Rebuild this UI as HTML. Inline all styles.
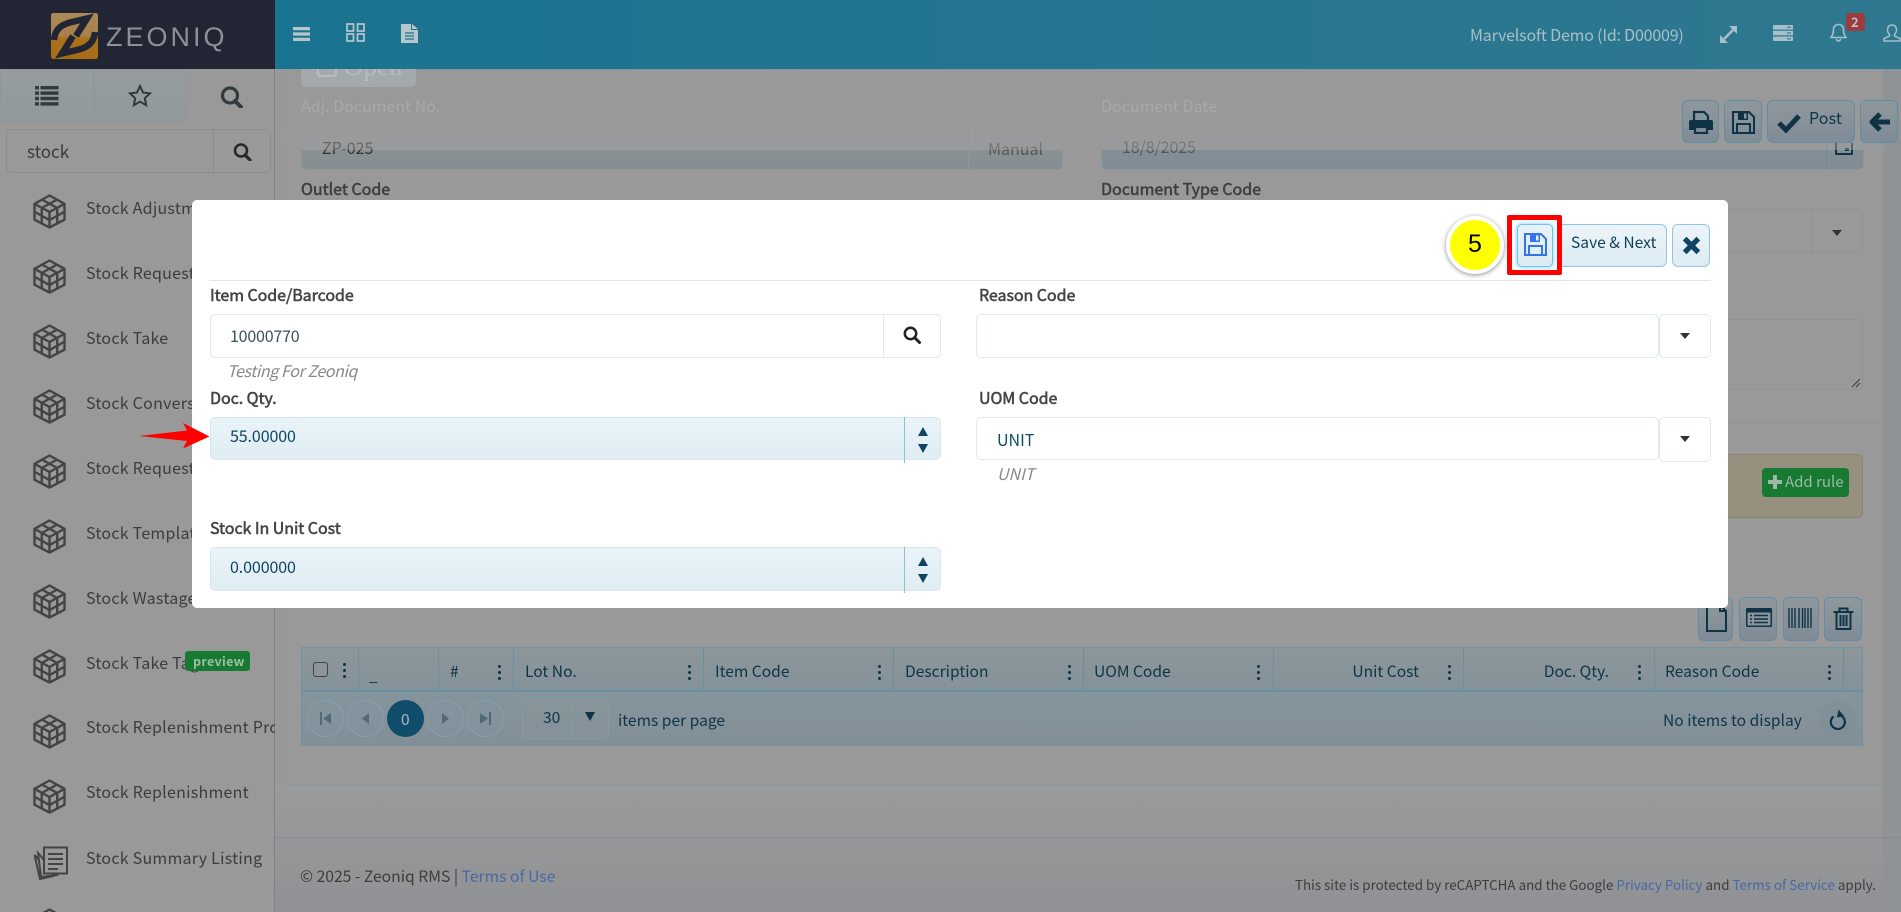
<!DOCTYPE html>
<html lang="en"><head><meta charset="utf-8"><title>Zeoniq</title>
<style>
html,body{margin:0;padding:0;width:1901px;height:912px;overflow:hidden;background:#999}
body{position:relative;font-family:"Noto Sans CJK SC","Liberation Sans",sans-serif;font-size:16px;color:#3a3a3a}
div,span,svg{position:absolute;box-sizing:border-box}
.t{white-space:nowrap;line-height:20px;height:20px}
.s{font-size:16px;letter-spacing:.25px;color:#3d3d3d;left:86px}
.l{font-size:16px;font-weight:400;-webkit-text-stroke:.55px #444;letter-spacing:-.05px;color:#444;left:210px}
.g{font-size:15.6px;color:#103445}
.d{width:3px;height:3px;border-radius:50%;background:#103445;box-shadow:0 6px 0 #103445,0 12px 0 #103445}
.v{width:1px;top:648px;height:43px;background:#6b8fa2}
.b{border:1px solid #5f8ea6;border-radius:6px;background:linear-gradient(#8f989c,#7f8c96)}
.mb{border:1px solid #93c6de;border-radius:6px;background:linear-gradient(#ecf5f9,#dcebf3)}
.inp{border:1px solid #dfe8ec;border-radius:5px;background:#fff}
.blu{border:1px solid #d8e6ee;border-radius:5px;background:linear-gradient(#e9f4f9,#dfedf4)}
.pg{width:37px;height:37px;top:700px;border-radius:50%;border:1px solid #84a0ae;background:rgba(140,160,170,.1)}
</style></head><body>

<!-- page base -->
<div style="left:275px;top:784px;width:1626px;height:128px;background:linear-gradient(#9a9a9a,#8f9295)"></div>
<div style="left:1883px;top:69px;width:18px;height:843px;background:#909396"></div>
<div style="left:282px;top:69px;width:1602px;height:716px;background:#999;border:1px solid #8a979e;border-radius:4px"></div>

<!-- sidebar -->
<div style="left:0;top:69px;width:275px;height:843px;background:#999;border-right:1px solid #7f8487"></div>
<div style="left:0;top:69px;width:94px;height:53px;background:linear-gradient(#979d9e,#91999c);border:1px solid #8e979b;border-radius:0 0 4px 4px"></div>
<div style="left:94px;top:69px;width:92px;height:53px;background:linear-gradient(#979d9e,#91999c);border:1px solid #8e979b;border-radius:0 0 4px 0"></div>
<svg style="left:35px;top:86px" width="24" height="20" viewBox="0 0 24 20" fill="#33393c"><rect y="0" width="4" height="3.4"/><rect x="5.5" y="0" width="18" height="3.4"/><rect y="5.4" width="4" height="3.4"/><rect x="5.5" y="5.4" width="18" height="3.4"/><rect y="10.8" width="4" height="3.4"/><rect x="5.5" y="10.8" width="18" height="3.4"/><rect y="16.2" width="4" height="3.4"/><rect x="5.5" y="16.2" width="18" height="3.4"/></svg>
<svg style="left:128px;top:84px" width="24" height="23" viewBox="0 0 24 23"><path d="M12 2l3 6.6 7 .8-5.200 4.800 1.400 7L12 17.600 5.800 21.200l1.400-7L2 9.400l7-.8z" fill="none" stroke="#33393c" stroke-width="2"/></svg>
<svg style="left:220px;top:86px" width="24" height="22" viewBox="0 0 24 22"><circle cx="10" cy="9.500" r="7.500" fill="none" stroke="#33393c" stroke-width="3.200"/><path d="M15 15l6 6" stroke="#33393c" stroke-width="4" stroke-linecap="round"/></svg>
<div style="left:6px;top:129px;width:265px;height:44px;border:1px solid #888e91;border-radius:5px"></div>
<div style="left:213px;top:130px;width:1px;height:42px;background:#888e91"></div>
<div class="t" style="left:27px;top:141px;font-size:17px;color:#3a3a3a">stock</div>
<svg style="left:233px;top:143px" width="19" height="18" viewBox="0 0 19 18"><circle cx="8" cy="7.500" r="6" fill="none" stroke="#23292c" stroke-width="2.600"/><path d="M12 12l5 5" stroke="#23292c" stroke-width="3.200" stroke-linecap="round"/></svg>

<svg width="0" height="0" style="left:0;top:0"><defs>
<symbol id="cube" viewBox="0 0 33 35"><g fill="none" stroke="#444" stroke-width="2.400" stroke-linejoin="round"><path d="M16.500 1.500L31.500 9.800V25.700L16.500 33.500 1.500 25.700V9.800z"/><path d="M1.500 9.800L16.500 18 31.500 9.800M16.500 18v15.500"/><path d="M8.750 5.500l15.500 8.500M24.250 5.500l-15.500 8.500M8.750 14v15.500M24.250 14v15.500M1.500 17.750l15 8.300 15-8.300"/></g></symbol>
</defs></svg>
<svg style="left:33px;top:194px" width="33" height="35"><use href="#cube"/></svg>
<svg style="left:33px;top:259px" width="33" height="35"><use href="#cube"/></svg>
<svg style="left:33px;top:324px" width="33" height="35"><use href="#cube"/></svg>
<svg style="left:33px;top:389px" width="33" height="35"><use href="#cube"/></svg>
<svg style="left:33px;top:454px" width="33" height="35"><use href="#cube"/></svg>
<svg style="left:33px;top:519px" width="33" height="35"><use href="#cube"/></svg>
<svg style="left:33px;top:584px" width="33" height="35"><use href="#cube"/></svg>
<svg style="left:33px;top:649px" width="33" height="35"><use href="#cube"/></svg>
<svg style="left:33px;top:714px" width="33" height="35"><use href="#cube"/></svg>
<svg style="left:33px;top:779px" width="33" height="35"><use href="#cube"/></svg>
<svg style="left:33px;top:908px" width="33" height="35"><use href="#cube"/></svg>
<svg style="left:33px;top:846px" width="36" height="34" viewBox="0 0 36 34"><g fill="#999" stroke="#444" stroke-width="2"><path d="M1.500 9L7 33l13-3z"/><path d="M5 7l3 24 16-2z"/><rect x="11" y="1.500" width="23" height="26"/></g><path d="M15 8h15M15 13h15M15 18h15M15 23h10" stroke="#444" stroke-width="2"/></svg>

<div class="t s" style="top:197px">Stock Adjustment</div>
<div class="t s" style="top:262px">Stock Request</div>
<div class="t s" style="top:327px">Stock Take</div>
<div class="t s" style="top:392px">Stock Conversion</div>
<div class="t s" style="top:457px">Stock Request</div>
<div class="t s" style="top:522px">Stock Template</div>
<div class="t s" style="top:587px">Stock Wastage</div>
<div class="t s" style="top:652px">Stock Take Tag</div>
<div style="left:185px;top:651px;width:65px;height:20px;background:#187a32;border-radius:3px"></div>
<div class="t" style="left:193px;top:651px;font-size:12.500px;font-weight:700;letter-spacing:.3px;color:#9dbfa6">preview</div>
<div style="left:86px;top:716px;width:189px;height:20px;overflow:hidden"><span class="t" style="left:0;top:0;font-size:16px;letter-spacing:.25px;color:#3d3d3d">Stock Replenishment Process</span></div>
<div class="t s" style="top:781px">Stock Replenishment</div>
<div class="t s" style="top:847px">Stock Summary Listing</div>

<!-- background form -->
<div style="left:301px;top:60px;width:115px;height:27px;background:#a3a9ad;border-radius:5px"></div>
<div class="t" style="left:344px;top:52px;font-size:27px;line-height:28px;height:28px;color:#b8babb;font-family:'Liberation Serif',serif">Open</div>
<svg style="left:317px;top:60px" width="20" height="17"><rect x="1" y="1" width="18" height="15" rx="3" fill="none" stroke="#b8babb" stroke-width="2.500"/></svg>
<div class="t" style="left:301px;top:95px;font-size:16px;color:#a9a9a9">Adj. Document No.</div>
<div class="t" style="left:1101px;top:95px;font-size:16px;color:#a9a9a9">Document Date</div>
<div style="left:301px;top:125px;width:762px;height:45px;border-radius:5px;background:linear-gradient(#9b9c9c 0,#979b9c 55%,#8a9194 56%,#868e92 100%);border:1px solid #909699"></div>
<div style="left:1101px;top:125px;width:763px;height:45px;border-radius:5px;background:linear-gradient(#9b9c9c 0,#979b9c 55%,#828f96 56%,#818d94 100%);border:1px solid #909699"></div>
<div style="left:968px;top:125px;width:1px;height:45px;background:#8f9598"></div>
<div style="left:1826px;top:125px;width:1px;height:45px;background:#6e8b9a"></div>
<div class="t" style="left:322px;top:137px;font-size:16px;color:#333">ZP-025</div>
<div class="t" style="left:988px;top:138px;font-size:16px;color:#555">Manual</div>
<div class="t" style="left:1122px;top:136px;font-size:16px;letter-spacing:-.1px;color:#555">18/8/2025</div>
<svg style="left:1835px;top:143px" width="18" height="12"><path d="M1 0v11h16V0" fill="none" stroke="#103445" stroke-width="2"/><rect x="10" y="5" width="4" height="3" fill="#103445"/></svg>
<div style="left:282px;top:125px;width:1602px;height:13px;background:rgba(153,153,153,.55)"></div>
<div style="left:282px;top:138px;width:1602px;height:12px;background:rgba(153,153,153,.5)"></div>
<div class="t" style="left:301px;top:178px;font-size:16px;-webkit-text-stroke:.55px #3f3f3f;color:#3f3f3f">Outlet Code</div>
<div class="t" style="left:1101px;top:178px;font-size:16px;-webkit-text-stroke:.55px #3f3f3f;color:#3f3f3f">Document Type Code</div>
<div style="left:1700px;top:209px;width:163px;height:44px;border:1px solid #8d9396;border-radius:5px"></div>
<div style="left:1812px;top:209px;width:1px;height:44px;background:#8d9396"></div>
<div style="left:1832px;top:230px;border:5px solid transparent;border-top:6px solid #333;border-bottom:0"></div>
<div style="left:1700px;top:319px;width:163px;height:71px;border:1px solid #8d9396;border-radius:4px"></div>
<svg style="left:1851px;top:378px" width="10" height="10"><path d="M1 9l8-8M5 9l4-4" stroke="#444" stroke-width="1.200"/></svg>
<div style="left:1700px;top:422px;width:183px;height:1px;background:#8d9396"></div>
<div style="left:1700px;top:454px;width:163px;height:64px;background:#96917f;border:1px solid #8c8467;border-radius:0 6px 6px 0"></div>
<div style="left:1762px;top:468px;width:87px;height:29px;background:#187a32;border-radius:4px"></div>
<div class="t" style="left:1785px;top:472px;font-size:15px;color:#9fb9a6">Add rule</div>
<svg style="left:1768px;top:475px" width="14" height="14"><path d="M5 0h4v5h5v4H9v5H5V9H0V5h5z" fill="#9fb9a6"/></svg>

<div class="b" style="left:1682px;top:100px;width:37px;height:43px"></div>
<div class="b" style="left:1724px;top:100px;width:38px;height:43px"></div>
<div class="b" style="left:1767px;top:100px;width:88px;height:43px"></div>
<div class="b" style="left:1860px;top:100px;width:38px;height:43px"></div>
<svg style="left:1689px;top:110px" width="24" height="24" viewBox="0 0 24 24"><path d="M5 10V2h10l4 4v4" fill="none" stroke="#0f3344" stroke-width="2.200"/><path d="M0 12a2 2 0 0 1 2-2h20a2 2 0 0 1 2 2v8h-5v-4H5v4H0z" fill="#0f3344"/><path d="M6 17h12v6H6z" fill="none" stroke="#0f3344" stroke-width="2.200"/></svg>
<svg style="left:1732px;top:111px" width="23" height="23" viewBox="0 0 23 23"><path d="M1 1h16l5 5v16H1z" fill="none" stroke="#0f3344" stroke-width="2"/><path d="M6 1h10v8H6z" fill="#0f3344"/><rect x="12" y="2.500" width="2.500" height="5" fill="#8a959b"/><path d="M5 13h13v9H5z" fill="none" stroke="#0f3344" stroke-width="2"/></svg>
<svg style="left:1777px;top:113px" width="24" height="20" viewBox="0 0 24 20"><path d="M2 10l7 7L22 3" fill="none" stroke="#0f3344" stroke-width="5"/></svg>
<div class="t" style="left:1809px;top:107px;font-size:16px;letter-spacing:.1px;color:#103445">Post</div>
<svg style="left:1869px;top:111px" width="22" height="22" viewBox="0 0 22 22"><path d="M11 3L3 11l8 8M4 11h17" fill="none" stroke="#0f3344" stroke-width="5" stroke-linejoin="round"/></svg>

<!-- grid tools -->
<div class="b" style="left:1698px;top:597px;width:35px;height:44px"></div>
<div class="b" style="left:1739px;top:597px;width:38px;height:44px"></div>
<div class="b" style="left:1783px;top:597px;width:36px;height:44px"></div>
<div class="b" style="left:1824px;top:597px;width:38px;height:44px"></div>
<svg style="left:1705px;top:604px" width="23" height="28" viewBox="0 0 23 28"><path d="M2 1h13l6 6v20H2z M15 1v6h6" fill="none" stroke="#0f3344" stroke-width="2"/></svg>
<svg style="left:1746px;top:608px" width="26" height="19" viewBox="0 0 26 19"><rect width="26" height="19" rx="1.500" fill="#0f3344"/><rect x="1.500" y="4.500" width="23" height="13" fill="#8b959b"/><path d="M4 7.500h2M8 7.500h14M4 11h2M8 11h14M4 14.500h2M8 14.500h14" stroke="#0f3344" stroke-width="1.500"/></svg>
<svg style="left:1788px;top:608px" width="26" height="20" viewBox="0 0 26 20"><path d="M1 0v20M4 0v20M7 0v20M11 0v20M14.500 0v20M17 0v20M20 0v20M23 0v20" stroke="#0f3344" stroke-width="1.400"/></svg>
<svg style="left:1833px;top:607px" width="21" height="23" viewBox="0 0 20 23"><path d="M0 5h20M6 5V1.500h8V5M3 5v17h14V5" fill="none" stroke="#0f3344" stroke-width="2"/><path d="M7 8v11M10 8v11M13 8v11" stroke="#0f3344" stroke-width="2"/></svg>

<!-- grid -->
<div style="left:301px;top:647px;width:1562px;height:99px;border:1px solid #6f94a7;background:linear-gradient(#8c979a,#84929a 44%,#84959c 46%,#838f98)"></div>
<div style="left:302px;top:690px;width:1560px;height:2px;background:#6a8ea2"></div>
<div class="v" style="left:358px"></div><div class="v" style="left:438px"></div><div class="v" style="left:513px"></div><div class="v" style="left:703px"></div><div class="v" style="left:893px"></div><div class="v" style="left:1083px"></div><div class="v" style="left:1273px"></div><div class="v" style="left:1463px"></div><div class="v" style="left:1654px"></div><div class="v" style="left:1843px"></div>
<div style="left:313px;top:662px;width:15px;height:15px;border:1.500px solid #444;border-radius:3px;background:#8e9599"></div>
<div class="d" style="left:343px;top:663px"></div><div class="d" style="left:498px;top:665px"></div><div class="d" style="left:688px;top:665px"></div><div class="d" style="left:878px;top:665px"></div><div class="d" style="left:1068px;top:665px"></div><div class="d" style="left:1257px;top:665px"></div><div class="d" style="left:1448px;top:665px"></div><div class="d" style="left:1638px;top:665px"></div><div class="d" style="left:1828px;top:665px"></div>
<div class="t g" style="left:369px;top:665px">_</div>
<div class="t g" style="left:450px;top:661px">#</div>
<div class="t g" style="left:525px;top:661px">Lot No.</div>
<div class="t g" style="left:715px;top:661px">Item Code</div>
<div class="t g" style="left:905px;top:661px">Description</div>
<div class="t g" style="left:1094px;top:661px">UOM Code</div>
<div class="t g" style="right:482px;top:661px">Unit Cost</div>
<div class="t g" style="right:292px;top:661px">Doc. Qty.</div>
<div class="t g" style="left:1665px;top:661px">Reason Code</div>
<div class="pg" style="left:307px"></div><div class="pg" style="left:347px"></div>
<div class="pg" style="left:387px;background:#0f4d6b;border-color:#0f4d6b"></div>
<div class="pg" style="left:427px"></div><div class="pg" style="left:467px"></div>
<svg style="left:320px;top:712px" width="11" height="13"><path d="M1 0v13" stroke="#536a75" stroke-width="2"/><path d="M11 1v11L3 6.500z" fill="#536a75"/></svg>
<svg style="left:361px;top:712px" width="9" height="13"><path d="M8 1v11L1 6.500z" fill="#536a75"/></svg>
<svg style="left:441px;top:712px" width="9" height="13"><path d="M1 1v11l7-5.500z" fill="#536a75"/></svg>
<svg style="left:480px;top:712px" width="11" height="13"><path d="M10 0v13" stroke="#536a75" stroke-width="2"/><path d="M0 1v11l8-5.500z" fill="#536a75"/></svg>
<div class="t" style="left:401px;top:709px;font-size:15.500px;color:#a3b9c4">0</div>
<div style="left:522px;top:697px;width:87px;height:42px;border:1px solid #849ba5;border-radius:4px;background:rgba(155,155,155,.15)"></div>
<div style="left:572px;top:698px;width:1px;height:40px;background:#849ba5"></div>
<div class="t g" style="left:543px;top:707px">30</div>
<div style="left:585px;top:712px;border:5px solid transparent;border-top:9px solid #0f3344;border-bottom:0"></div>
<div class="t g" style="left:618px;top:710px">items per page</div>
<div class="t g" style="left:1663px;top:710px">No items to display</div>
<div style="left:1819px;top:700px;width:38px;height:38px;border-radius:50%;background:rgba(115,135,148,.25)"></div>
<svg style="left:1829px;top:709px" width="19" height="21" viewBox="0 0 19 21"><path d="M4.500 7.500A7 7 0 1 0 11.500 6.500" fill="none" stroke="#0f3344" stroke-width="2.200"/><path d="M9.500 0.500l5.500 6.500-7 1.500z" fill="#0f3344"/></svg>

<!-- footer -->
<div style="left:275px;top:837px;width:1626px;height:1px;background:#858b90"></div>
<div class="t" style="left:300px;top:866px;font-size:15.700px;color:#3d3d3d">© 2025 - Zeoniq RMS | <span style="position:static;color:#4a68a3">Terms of Use</span></div>
<div class="t" style="right:25px;top:874px;font-size:13.400px;color:#3d3d3d">This site is protected by reCAPTCHA and the Google <span style="position:static;color:#4a68a3">Privacy Policy</span> and <span style="position:static;color:#4a68a3">Terms of Service</span> apply.</div>

<!-- header -->
<div style="left:0;top:0;width:275px;height:69px;background:#222634"></div>
<div style="left:275px;top:0;width:1626px;height:69px;background:linear-gradient(90deg,#1a7390,#2f788f)"></div>
<svg style="left:51px;top:13px" width="47" height="46" viewBox="0 0 47 46"><defs><linearGradient id="lg" x1="0" y1="0" x2="0" y2="1"><stop offset="0" stop-color="#ab8a5a"/><stop offset=".5" stop-color="#a98048"/><stop offset=".55" stop-color="#ab7218"/><stop offset="1" stop-color="#a86c16"/></linearGradient></defs><rect width="47" height="46" rx="2.500" fill="url(#lg)"/><g fill="none" stroke="#222634" stroke-width="6.500"><path d="M3 27C4 15 12 11 21 9L36 5.500 25 23"/><path d="M44 19C43 31 35 35 26 37L11 40.500 22 23"/></g></svg>
<div class="t" style="left:106px;top:21px;height:32px;line-height:32px;font-size:27px;letter-spacing:3px;color:#8f9095;font-family:'Liberation Sans',sans-serif">ZEONIQ</div>
<svg style="left:293px;top:27px" width="17" height="14"><path d="M0 0h17v3.200H0zM0 5.400h17v3.200H0zM0 10.800h17v3.200H0z" fill="#b5c6cc"/></svg>
<svg style="left:346px;top:23px" width="19" height="19"><g fill="none" stroke="#b5c6cc" stroke-width="1.700"><rect x="1" y="1" width="6.500" height="7"/><rect x="11.500" y="1" width="6.500" height="7"/><rect x="1" y="11" width="6.500" height="7"/><rect x="11.500" y="11" width="6.500" height="7"/></g></svg>
<svg style="left:401px;top:24px" width="17" height="19" viewBox="0 0 17 19"><path d="M0 0h10v6h7v13H0z" fill="#b5c6cc"/><path d="M11 0l6 5h-6z" fill="#b5c6cc"/><path d="M4 9h9M4 12h9M4 15h9" stroke="#1c7490" stroke-width="1.200"/></svg>
<div class="t" style="left:1470px;top:24px;font-size:16px;letter-spacing:-.2px;color:#a7bfc9">Marvelsoft Demo (Id: D00009)</div>
<svg style="left:1720px;top:26px" width="17" height="17"><path d="M9 0h8v8zM0 9v8h8z" fill="#a7bfc9"/><path d="M4 13L13 4" stroke="#a7bfc9" stroke-width="2.600"/></svg>
<svg style="left:1773px;top:25px" width="20" height="16"><path d="M0 1a1 1 0 0 1 1-1h18a1 1 0 0 1 1 1v3.500H0zM0 5.700h20v4.600H0zM0 11.500h20V15a1 1 0 0 1-1 1H1a1 1 0 0 1-1-1z" fill="#a7bfc9"/><path d="M14 2.200h4M14 8h4M14 13.800h4" stroke="#2e788f" stroke-width="1.200"/></svg>
<svg style="left:1830px;top:23px" width="17" height="19" viewBox="0 0 17 19"><path d="M8.500 1.500c-3 0-5 2-5 5 0 4-1 6-2.500 8h15c-1.500-2-2.500-4-2.500-8 0-3-2-5-5-5zM6.500 16a2 2 0 0 0 4 0" fill="none" stroke="#a7bfc9" stroke-width="1.600"/></svg>
<div style="left:1846px;top:13px;width:19px;height:18px;background:#9e3b3f;border-radius:3px"></div>
<div class="t" style="left:1851px;top:12px;font-size:13px;font-weight:700;color:#b9c2c6">2</div>
<svg style="left:1883px;top:24px" width="18" height="18" viewBox="0 0 18 18"><path d="M9 1c-3 0-4.500 2-4.500 5 0 2 1 3.500 2 4.500v1.500L1 14.500V17h16v-2.500L11.500 12v-1.500c1-1 2-2.500 2-4.500 0-3-1.500-5-4.500-5z" fill="none" stroke="#a7bfc9" stroke-width="1.500"/></svg>

<!-- modal -->
<div style="left:192px;top:200px;width:1536px;height:408px;background:#fff;border-radius:5px"></div>
<div style="left:209px;top:280px;width:1502px;height:1px;background:#e3e3e3"></div>

<div style="left:1552px;top:224px;width:115px;height:43px;border:1px solid #93c6de;border-radius:0 6px 6px 0;background:linear-gradient(#ecf5f9,#dcebf3)"></div>
<div class="t" style="left:1571px;top:232px;font-size:15.600px;color:#103f56">Save &amp; Next</div>
<div class="mb" style="left:1672px;top:224px;width:38px;height:43px"></div>
<svg style="left:1682px;top:236px" width="19" height="19" viewBox="0 0 18 18"><path d="M2.500 2.500l13 13M15.500 2.500l-13 13" stroke="#0f4560" stroke-width="5"/></svg>
<div style="left:1507px;top:215px;width:55px;height:60px;border:5px solid #f00;border-radius:2px;background:#fff"></div>
<div style="left:1517px;top:224px;width:36px;height:43px;border:1px solid #6fc3ee;border-radius:5px;background:linear-gradient(#e8f3f9,#dcebf3);box-shadow:0 0 3px 1px #9fdcfb"></div>
<svg style="left:1524px;top:233px" width="23" height="23" viewBox="0 0 23 23"><path d="M1 1h16l5 5v16H1z" fill="none" stroke="#3574e8" stroke-width="2"/><path d="M6 1h10v8H6z" fill="#3574e8"/><rect x="12" y="2.500" width="2.500" height="5" fill="#e4f0f7"/><path d="M5 13h13v9H5z" fill="none" stroke="#3574e8" stroke-width="2"/></svg>
<div style="left:1446px;top:216px;width:58px;height:58px;border-radius:50%;background:#ff0;border:4px solid #fff;box-shadow:0 1px 5px rgba(0,0,0,.45)"></div>
<div class="t" style="left:1446px;top:229px;width:58px;height:30px;line-height:30px;text-align:center;font-size:25px;color:#000;font-family:'Liberation Sans',sans-serif">5</div>

<div class="t l" style="top:284px">Item Code/Barcode</div>
<div class="t l" style="left:979px;top:284px">Reason Code</div>
<div class="inp" style="left:210px;top:314px;width:731px;height:44px"></div>
<div style="left:883px;top:315px;width:1px;height:42px;background:#dfe8ec"></div>
<div class="t" style="left:230px;top:325px;font-size:16px;letter-spacing:-.2px;color:#3d4f5a">10000770</div>
<svg style="left:903px;top:326px" width="18" height="18" viewBox="0 0 18 18"><circle cx="7.500" cy="7.500" r="5.700" fill="none" stroke="#222" stroke-width="2.500"/><path d="M11.500 11.500l5 5" stroke="#222" stroke-width="3" stroke-linecap="round"/></svg>
<div class="t" style="left:227px;top:360px;font-size:16px;font-style:italic;letter-spacing:-.4px;color:#888">Testing For Zeoniq</div>
<div class="inp" style="left:976px;top:314px;width:683px;height:44px"></div>
<div class="inp" style="left:1659px;top:314px;width:52px;height:44px"></div>
<div style="left:1680px;top:333px;border:5px solid transparent;border-top:6px solid #333;border-bottom:0"></div>

<div class="t l" style="top:387px">Doc. Qty.</div>
<div class="t l" style="left:979px;top:387px">UOM Code</div>
<div class="blu" style="left:210px;top:417px;width:731px;height:43px"></div>
<div style="left:904px;top:417px;width:1px;height:46px;background:#8fbfd6"></div>
<div class="t" style="left:230px;top:425px;font-size:16px;letter-spacing:-.1px;color:#0f4560">55.00000</div>
<div style="left:918px;top:427px;border:5px solid transparent;border-bottom:9px solid #0f4560;border-top:0"></div>
<div style="left:918px;top:444px;border:5px solid transparent;border-top:9px solid #0f4560;border-bottom:0"></div>
<div class="inp" style="left:976px;top:417px;width:683px;height:43px"></div>
<div class="inp" style="left:1659px;top:417px;width:52px;height:45px"></div>
<div style="left:1680px;top:436px;border:5px solid transparent;border-top:6px solid #333;border-bottom:0"></div>
<div class="t" style="left:997px;top:429px;font-size:16px;color:#0f4c66">UNIT</div>
<div class="t" style="left:997px;top:463px;font-size:16px;font-style:italic;color:#888">UNIT</div>

<div class="t l" style="top:517px">Stock In Unit Cost</div>
<div class="blu" style="left:210px;top:547px;width:731px;height:44px"></div>
<div style="left:904px;top:547px;width:1px;height:46px;background:#8fbfd6"></div>
<div class="t" style="left:230px;top:556px;font-size:16px;letter-spacing:-.1px;color:#0f4560">0.000000</div>
<div style="left:918px;top:557px;border:5px solid transparent;border-bottom:9px solid #0f4560;border-top:0"></div>
<div style="left:918px;top:574px;border:5px solid transparent;border-top:9px solid #0f4560;border-bottom:0"></div>

<!-- arrow -->
<svg style="left:135px;top:418px" width="80" height="36" viewBox="135 418 80 36"><path d="M139 436L187 430.500 183 423l26.500 13.500L183 448.500 187 441z" fill="#f00"/></svg>
</body></html>
